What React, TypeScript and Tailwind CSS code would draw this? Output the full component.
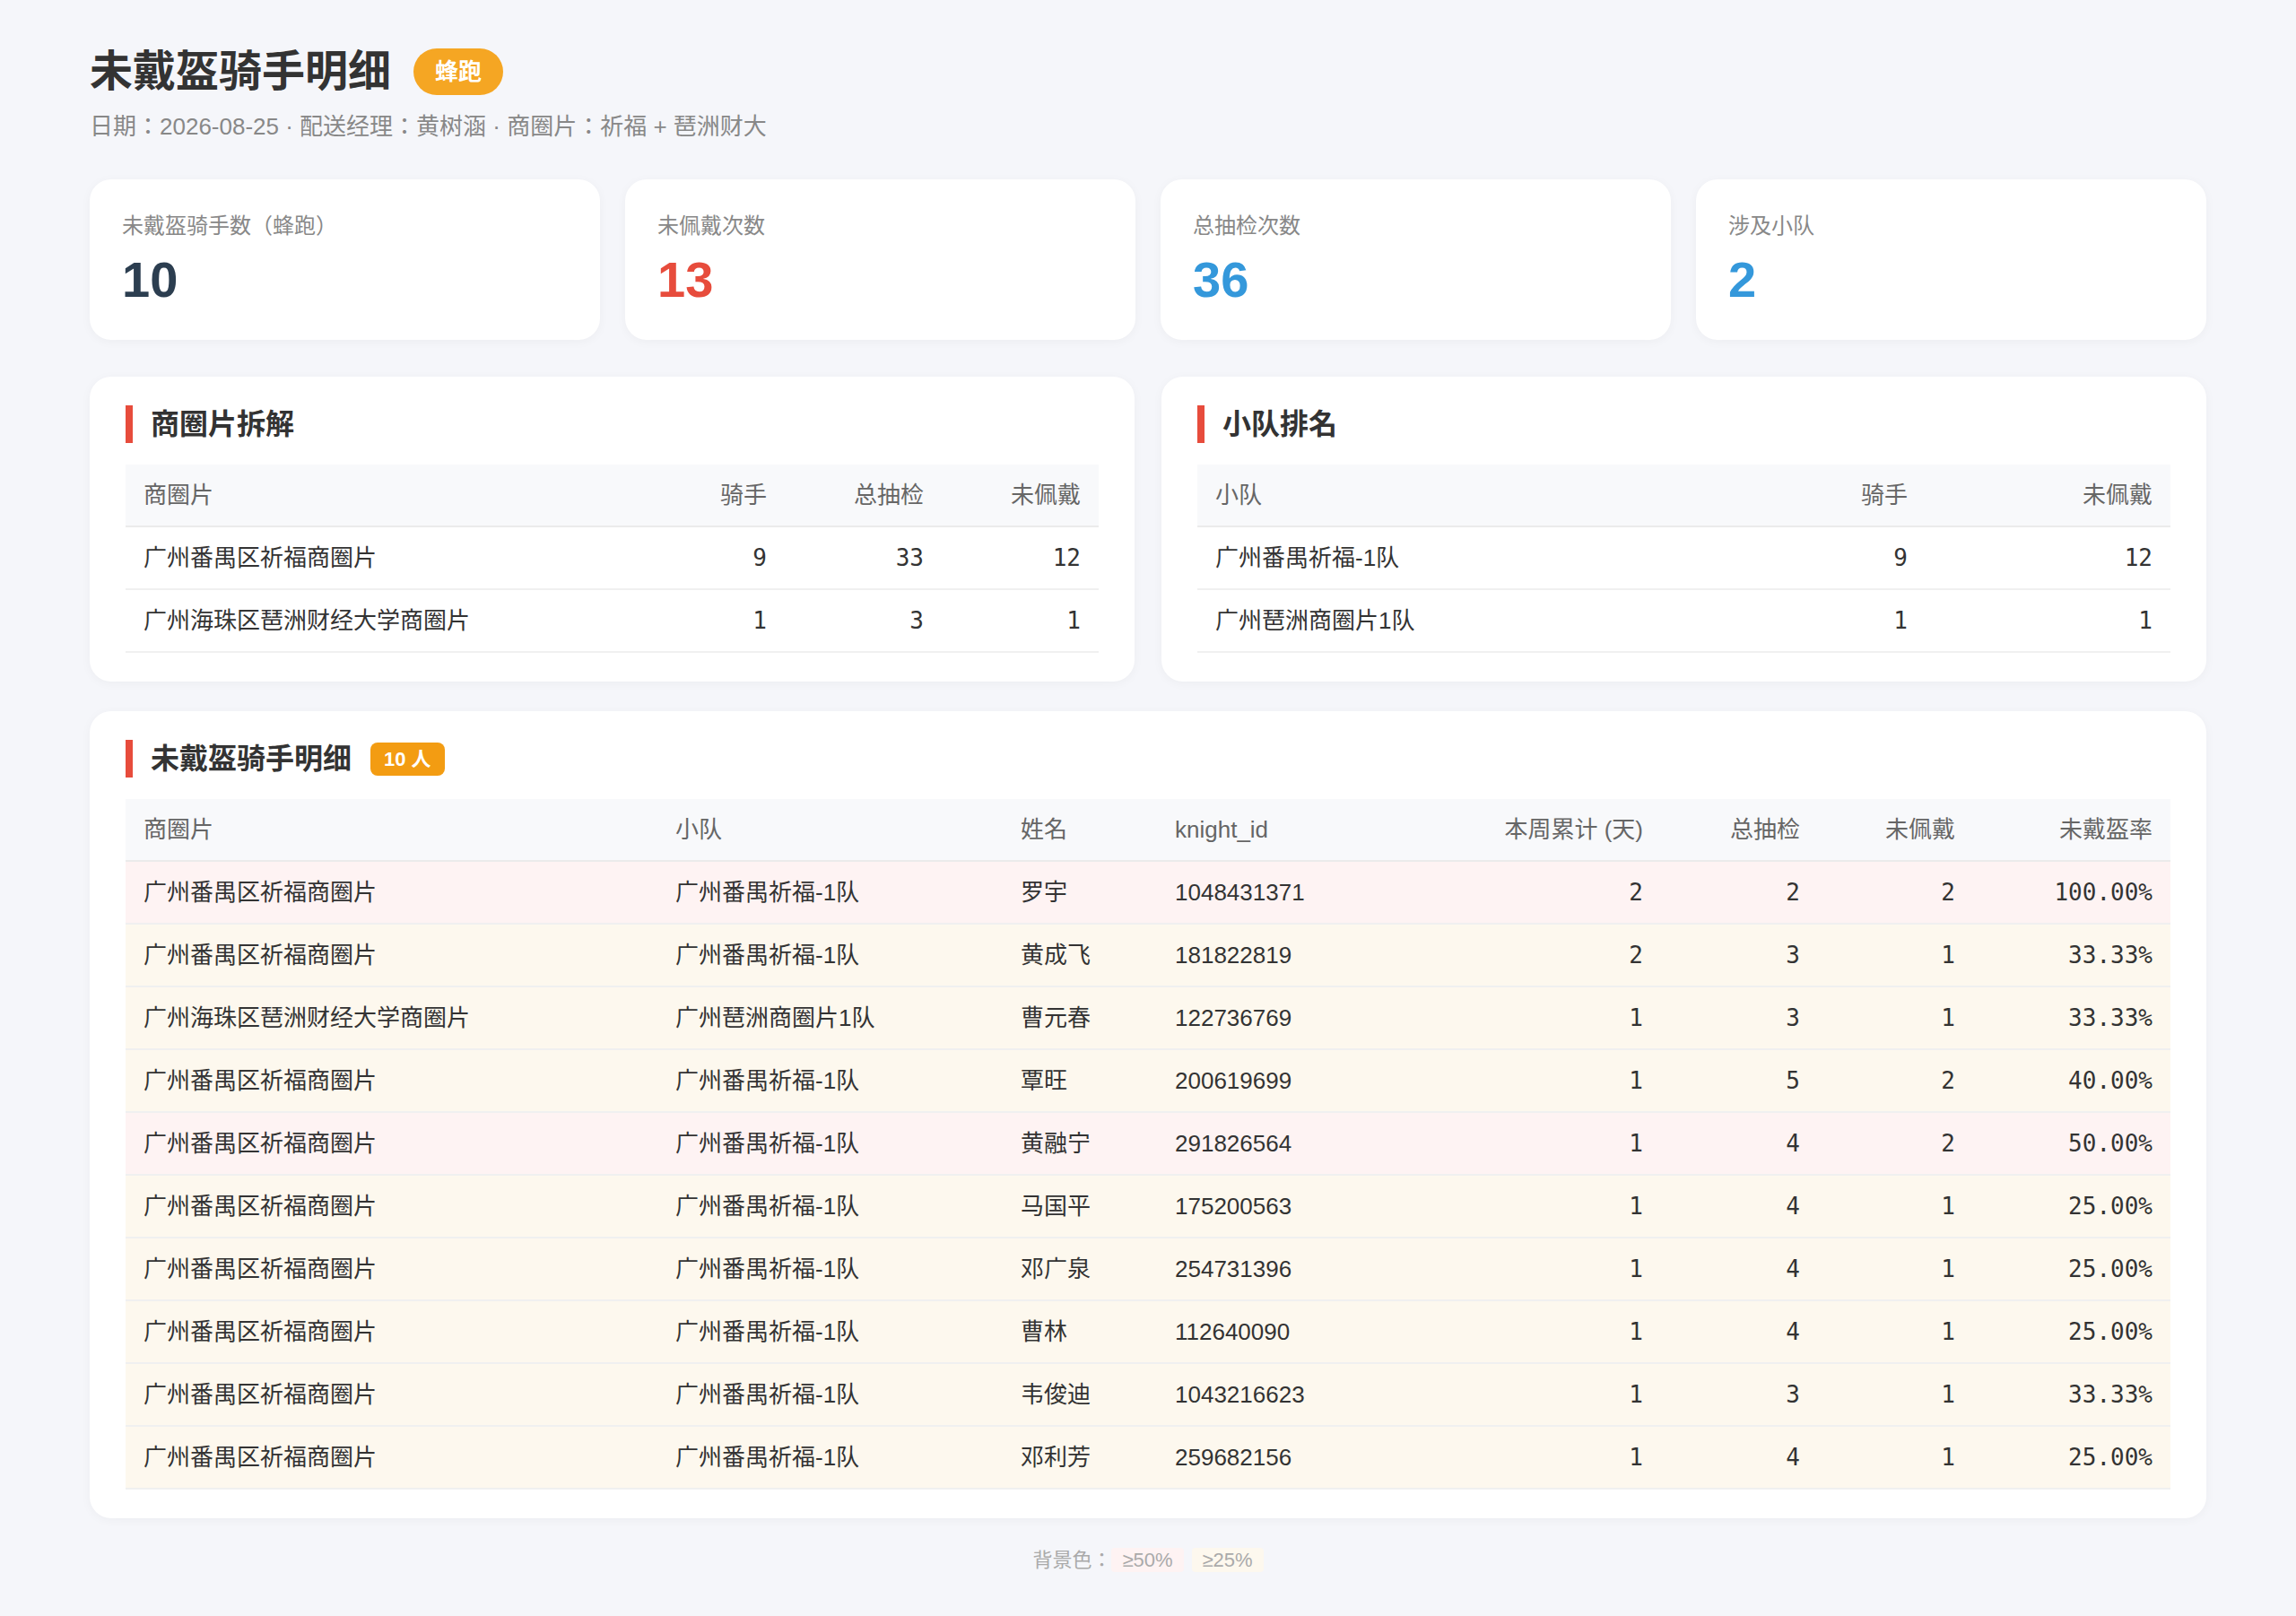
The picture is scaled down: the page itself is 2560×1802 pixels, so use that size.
// ── HelmetReport ──
// Daily report of riders seen without a helmet.

const SANS = "[font-family:'Liberation_Sans','Noto_Sans_CJK_JP',sans-serif]"
const MONO = "[font-family:'DejaVu_Sans_Mono','Noto_Sans_CJK_JP',monospace]"

const stats = [
  { label: '未戴盔骑手数（蜂跑）', value: '10', color: 'text-[#2c3e50]' },
  { label: '未佩戴次数', value: '13', color: 'text-[#e74c3c]' },
  { label: '总抽检次数', value: '36', color: 'text-[#3498db]' },
  { label: '涉及小队', value: '2', color: 'text-[#3498db]' },
]

const areas = [
  { name: '广州番禺区祈福商圈片', riders: 9, checks: 33, missed: 12 },
  { name: '广州海珠区琶洲财经大学商圈片', riders: 1, checks: 3, missed: 1 },
]

const teams = [
  { name: '广州番禺祈福-1队', riders: 9, missed: 12 },
  { name: '广州琶洲商圈片1队', riders: 1, missed: 1 },
]

const PY = '广州番禺区祈福商圈片'
const PY_TEAM = '广州番禺祈福-1队'

const riders = [
  { area: PY, team: PY_TEAM, name: '罗宇', id: '1048431371', days: 2, checks: 2, missed: 2, rate: '100.00%', hot: true },
  { area: PY, team: PY_TEAM, name: '黄成飞', id: '181822819', days: 2, checks: 3, missed: 1, rate: '33.33%', hot: false },
  { area: '广州海珠区琶洲财经大学商圈片', team: '广州琶洲商圈片1队', name: '曹元春', id: '122736769', days: 1, checks: 3, missed: 1, rate: '33.33%', hot: false },
  { area: PY, team: PY_TEAM, name: '覃旺', id: '200619699', days: 1, checks: 5, missed: 2, rate: '40.00%', hot: false },
  { area: PY, team: PY_TEAM, name: '黄融宁', id: '291826564', days: 1, checks: 4, missed: 2, rate: '50.00%', hot: true },
  { area: PY, team: PY_TEAM, name: '马国平', id: '175200563', days: 1, checks: 4, missed: 1, rate: '25.00%', hot: false },
  { area: PY, team: PY_TEAM, name: '邓广泉', id: '254731396', days: 1, checks: 4, missed: 1, rate: '25.00%', hot: false },
  { area: PY, team: PY_TEAM, name: '曹林', id: '112640090', days: 1, checks: 4, missed: 1, rate: '25.00%', hot: false },
  { area: PY, team: PY_TEAM, name: '韦俊迪', id: '1043216623', days: 1, checks: 3, missed: 1, rate: '33.33%', hot: false },
  { area: PY, team: PY_TEAM, name: '邓利芳', id: '259682156', days: 1, checks: 4, missed: 1, rate: '25.00%', hot: false },
]

function SectionTitle({ children }: { children: React.ReactNode }) {
  return (
    <div className="flex items-center">
      <div className="border-l-[8px] border-[#e74c3c] pl-[20px] text-[32px] leading-[42px] font-bold text-[#333]">{children}</div>
    </div>
  )
}

function Panel({ children }: { children: React.ReactNode }) {
  return <div className="bg-white rounded-[24px] px-[40px] py-[32px] shadow-[0_2px_12px_rgba(0,0,0,0.04)]">{children}</div>
}

export default function App() {
  return (
    <div className={`min-h-screen bg-[#f5f6fa] px-[100px] pt-[50px] pb-[46px] text-[#333] ${SANS}`}>
      <div className="flex items-center h-[60px]">
        <h1 className="text-[48px] leading-[58px] font-bold text-[#333]">未戴盔骑手明细</h1>
        <span className="ml-[25px] h-[52px] px-[24px] flex items-center rounded-full bg-[#f5a623] text-white text-[26px] font-bold">蜂跑</span>
      </div>
      <div className="mt-[12px] text-[26px] leading-[39px] text-[#888]">
        日期：2026-08-25 · 配送经理：黄树涵 · 商圈片：祈福 + 琶洲财大
      </div>

      {/* stat cards */}
      <div className="mt-[39px] grid grid-cols-4 gap-[28px]">
        {stats.map((s) => (
          <div key={s.label} className="bg-white rounded-[24px] px-[36px] pt-[34px] pb-[34px] shadow-[0_2px_12px_rgba(0,0,0,0.04)]">
            <div className="text-[24px] leading-[36px] text-[#888]">{s.label}</div>
            <div className={`mt-[8px] text-[56px] leading-[67px] font-bold ${s.color}`}>{s.value}</div>
          </div>
        ))}
      </div>

      <div className="mt-[41px] grid grid-cols-2 gap-[30px]">
        <Panel>
          <SectionTitle>商圈片拆解</SectionTitle>
          <div className="mt-[24px] text-[26px]">
            <div className="grid grid-cols-[1fr_175px_175px_175px] h-[70px] items-center bg-[#f8f9fb] border-b-2 border-[#ebebeb] text-[#666]">
              <div className="px-[20px]">商圈片</div>
              <div className="px-[20px] text-right">骑手</div>
              <div className="px-[20px] text-right">总抽检</div>
              <div className="px-[20px] text-right">未佩戴</div>
            </div>
            {areas.map((a) => (
              <div key={a.name} className="grid grid-cols-[1fr_175px_175px_175px] h-[70px] items-center border-b-2 border-[#f0f0f0]">
                <div className="px-[20px]">{a.name}</div>
                <div className={`px-[20px] text-right ${MONO}`}>{a.riders}</div>
                <div className={`px-[20px] text-right ${MONO}`}>{a.checks}</div>
                <div className={`px-[20px] text-right ${MONO}`}>{a.missed}</div>
              </div>
            ))}
          </div>
        </Panel>

        <Panel>
          <SectionTitle>小队排名</SectionTitle>
          <div className="mt-[24px] text-[26px]">
            <div className="grid grid-cols-[1fr_200px_273px] h-[70px] items-center bg-[#f8f9fb] border-b-2 border-[#ebebeb] text-[#666]">
              <div className="px-[20px]">小队</div>
              <div className="px-[20px] text-right">骑手</div>
              <div className="px-[20px] text-right">未佩戴</div>
            </div>
            {teams.map((t) => (
              <div key={t.name} className="grid grid-cols-[1fr_200px_273px] h-[70px] items-center border-b-2 border-[#f0f0f0]">
                <div className="px-[20px]">{t.name}</div>
                <div className={`px-[20px] text-right ${MONO}`}>{t.riders}</div>
                <div className={`px-[20px] text-right ${MONO}`}>{t.missed}</div>
              </div>
            ))}
          </div>
        </Panel>
      </div>

      {/* rider detail */}
      <div className="mt-[33px]">
        <Panel>
          <div className="flex items-center">
            <SectionTitle>未戴盔骑手明细</SectionTitle>
            <span className="ml-[21px] h-[37px] px-[15px] flex items-center rounded-[8px] bg-[#f39c12] text-white text-[22px] font-bold">10 人</span>
          </div>
          <div className="mt-[24px] text-[26px]">
            <div className="grid grid-cols-[593px_385px_172px_300px_262px_175px_173px_220px] h-[70px] items-center bg-[#f8f9fb] border-b-2 border-[#ebebeb] text-[#666]">
              <div className="px-[20px]">商圈片</div>
              <div className="px-[20px]">小队</div>
              <div className="px-[20px]">姓名</div>
              <div className="px-[20px]">knight_id</div>
              <div className="px-[20px] text-right">本周累计 (天)</div>
              <div className="px-[20px] text-right">总抽检</div>
              <div className="px-[20px] text-right">未佩戴</div>
              <div className="px-[20px] text-right">未戴盔率</div>
            </div>
            {riders.map((r) => (
              <div
                key={r.id}
                className={`grid grid-cols-[593px_385px_172px_300px_262px_175px_173px_220px] h-[70px] items-center border-b-2 border-[#f0f0f0] ${r.hot ? 'bg-[#fef3f3]' : 'bg-[#fdf8ee]'}`}
              >
                <div className="px-[20px]">{r.area}</div>
                <div className="px-[20px]">{r.team}</div>
                <div className="px-[20px]">{r.name}</div>
                <div className="px-[20px]">{r.id}</div>
                <div className={`px-[20px] text-right ${MONO}`}>{r.days}</div>
                <div className={`px-[20px] text-right ${MONO}`}>{r.checks}</div>
                <div className={`px-[20px] text-right ${MONO}`}>{r.missed}</div>
                <div className={`px-[20px] text-right ${MONO}`}>{r.rate}</div>
              </div>
            ))}
          </div>
        </Panel>
      </div>

      <div className="mt-[30px] flex justify-center items-center text-[22px] leading-[33px] text-[#aaa]">
        <span>背景色：</span>
        <span className="h-[27px] leading-[27px] px-[12px] rounded-[4px] bg-[#fef3f3]">≥50%</span>
        <span className="ml-[9px] h-[27px] leading-[27px] px-[12px] rounded-[4px] bg-[#fdf8ee]">≥25%</span>
      </div>
    </div>
  )
}
